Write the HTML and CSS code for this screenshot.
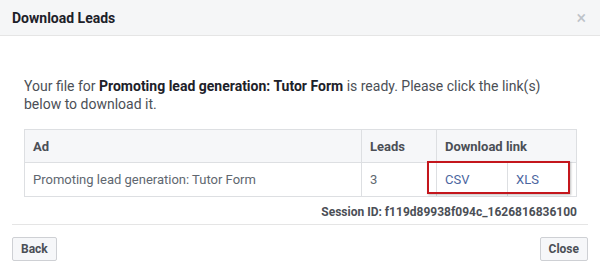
FILE: index.html
```html
<html>
  <head>
    <title>Download Leads</title>
    <link rel="stylesheet" href="styles.css">
  </head>
  <body>
    <div class="dialog">
      <div class="dialog-header">
        <h2>Download Leads</h2>
        <span class="close-x">&times;</span>
      </div>

      <div class="dialog-body">
        <p class="intro">
          Your file for <b>Promoting lead generation: Tutor Form</b> is ready. Please click the link(s)
          below to download it.
        </p>

        <div class="table-wrap">
          <table class="leads">
            <tr>
              <th class="col-ad">Ad</th>
              <th class="col-leads">Leads</th>
              <th colspan="2">Download link</th>
            </tr>
            <tr>
              <td>Promoting lead generation: Tutor Form</td>
              <td>3</td>
              <td class="col-csv"><a href="#">CSV</a></td>
              <td><a href="#">XLS</a></td>
            </tr>
          </table>
          <!-- annotation box over the links -->
          <div class="highlight"></div>
        </div>

        <div class="session">Session ID: f119d89938f094c_1626816836100</div>
      </div>

      <div class="dialog-footer">
        <button class="btn">Back</button>
        <button class="btn">Close</button>
      </div>
    </div>
  </body>
</html>
```

FILE: styles.css
```css
body {
  margin: 0;
  font-family: Roboto, "Liberation Sans", sans-serif;
  color: #4b4f56;
  background: #fff;
}

.dialog {
  width: 600px;
  height: 269px;
}

.dialog-header {
  height: 35px;
  background: #f5f6f7;
  border-bottom: 1px solid #e5e5e5;
  display: flex;
  align-items: center;
  justify-content: space-between;
  padding: 0 12px;
}
.dialog-header h2 {
  margin: 0;
  font-size: 14px;
  font-weight: bold;
  color: #1d2129;
}
.close-x {
  color: #bec3c9;
  font-size: 18px;
  margin-right: 2px;
}

.dialog-body {
  padding: 0 23px 0 24px;
}

.intro {
  margin: 41px 0 0 0;
  font-size: 14px;
  line-height: 18px;
  color: #4b4f56;
}
.intro b {
  color: #1d2129;
}

.table-wrap {
  position: relative;
  margin-top: 16px;
}
table.leads {
  width: 553px;
  border-collapse: collapse;
  font-size: 13px;
}
table.leads th,
table.leads td {
  border: 1px solid #dddfe2;
  text-align: left;
  padding: 0 8px;
}
table.leads th {
  height: 33px;
  background: #f6f7f9;
  font-weight: bold;
  color: #4b4f56;
}
table.leads td {
  height: 34px;
  color: #606770;
}
.col-ad { width: 320px; }
.col-leads { width: 58px; }
.col-csv { width: 54px; }
table.leads a {
  color: #4b66a0;
  text-decoration: none;
}

.highlight {
  position: absolute;
  left: 403px;
  top: 32px;
  width: 139px;
  height: 29px;
  border: 2px solid #c4161c;
  box-shadow: 1px 1px 2px rgba(0,0,0,0.25);
}

.session {
  text-align: right;
  font-size: 12px;
  font-weight: bold;
  margin-top: 8px;
  color: #4b4f56;
}

.dialog-footer {
  margin: 5px 12px 0 12px;
  border-top: 1px solid #e5e5e5;
  padding-top: 12px;
  display: flex;
  justify-content: space-between;
}
.btn {
  height: 24px;
  padding: 0 8px;
  background: #f6f7f9;
  border: 1px solid #ced0d4;
  border-radius: 2px;
  font-family: Roboto, "Liberation Sans", sans-serif;
  font-size: 12px;
  font-weight: bold;
  color: #4b4f56;
}
```
